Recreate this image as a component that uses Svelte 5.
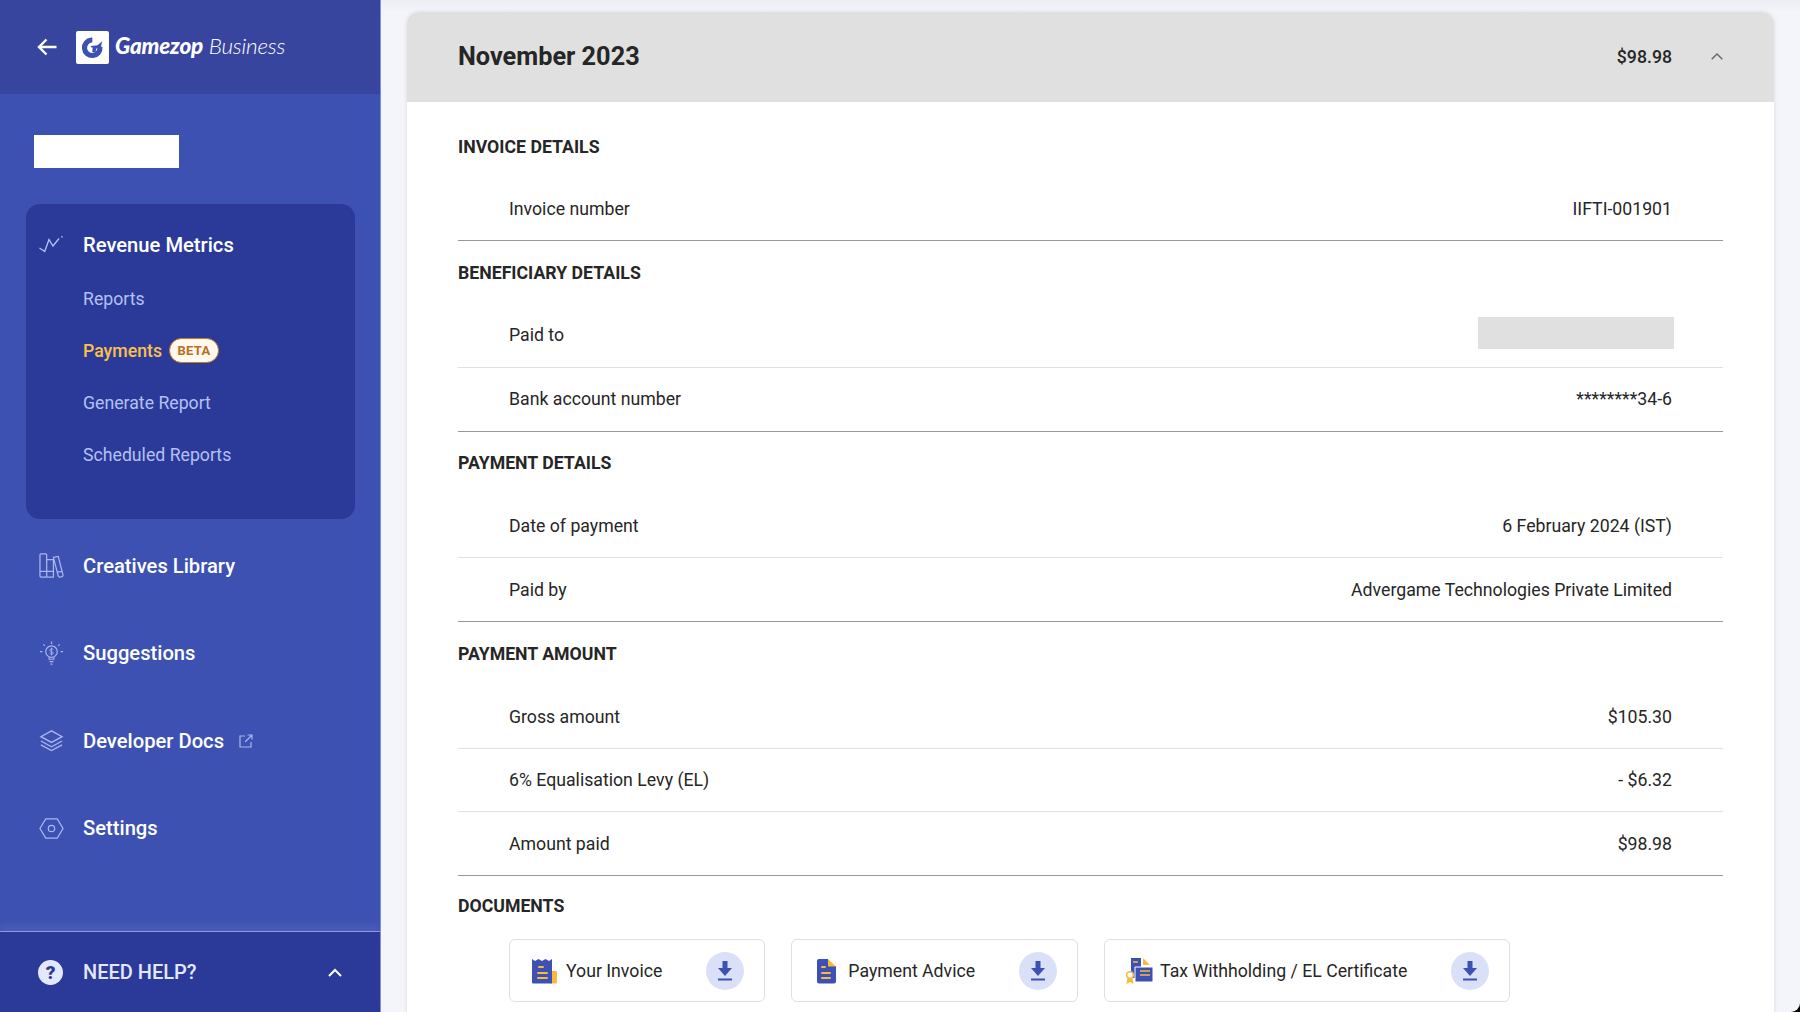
<script>
  const subItems = ["Reports", "Payments", "Generate Report", "Scheduled Reports"];
  const sections = [
    { title: "INVOICE DETAILS", rows: [{ label: "Invoice number", value: "IIFTI-001901" }] },
    {
      title: "BENEFICIARY DETAILS",
      rows: [
        { label: "Paid to", hidden: true },
        { label: "Bank account number", value: "********34-6" }
      ]
    },
    {
      title: "PAYMENT DETAILS",
      rows: [
        { label: "Date of payment", value: "6 February 2024 (IST)" },
        { label: "Paid by", value: "Advergame Technologies Private Limited" }
      ]
    },
    {
      title: "PAYMENT AMOUNT",
      rows: [
        { label: "Gross amount", value: "$105.30" },
        { label: "6% Equalisation Levy (EL)", value: "- $6.32" },
        { label: "Amount paid", value: "$98.98" }
      ]
    }
  ];
  const docs = [
    { name: "Your Invoice", kind: "invoice" },
    { name: "Payment Advice", kind: "advice" },
    { name: "Tax Withholding / EL Certificate", kind: "tax" }
  ];
</script>

<div class="page">
  <aside class="sidebar">
    <header class="brand">
      <svg class="back" viewBox="0 0 20 18" width="20" height="18" fill="none" stroke="#fff" stroke-width="2.400">
        <path d="M19.500 9H2.500M9.500 1.500 2 9l7.500 7.500" />
      </svg>
      <span class="logo">
        <svg viewBox="0 0 24 24" width="27" height="27">
          <circle cx="11.800" cy="12.200" r="6.900" fill="none" stroke="#3d51b3" stroke-width="4.600" stroke-dasharray="33 10.400" transform="rotate(-5 11.800 12.200)" />
          <path fill="#3d51b3" d="M10.500 10.600l6-.6 4-3.500-1 5.300-4.300 1.200-.4 3.300h-3l.3-4.300-1.600-.2Z" />
        </svg>
      </span>
      <span class="wordmark"><b>Gamezop</b> <i>Business</i></span>
    </header>

    <div class="account"></div>

    <nav class="panel">
      <div class="item first">
        <svg class="ico" viewBox="0 0 25 18" fill="none" stroke="#b4c0f5" stroke-width="1.400">
          <path d="M.5 12l5.200 3.500L10 3.500l4 6.500 6-7.500" />
          <circle cx="23" cy=".9" r=".8" fill="#b4c0f5" stroke="none" />
        </svg>
        <span>Revenue Metrics</span>
      </div>
      {#each subItems as sub}
        <div class="sub" class:active={sub === "Payments"}>
          <span>{sub}</span>
          {#if sub === "Payments"}<span class="beta">BETA</span>{/if}
        </div>
      {/each}
    </nav>

    <div class="menu">
      <div class="item">
        <svg class="ico tall" viewBox="0 0 26 26" fill="none" stroke="#a9b6f0" stroke-width="1.300">
          <rect x="1" y="1" width="7" height="24" rx="1" />
          <path d="M1 19h7M8 7h7v18H8M8 19h7" />
          <path d="M15 4.500l5-1 5 19.500a1.500 1.500 0 0 1-1 1.500l-2.500.5a1.500 1.500 0 0 1-1.500-1ZM19 20l5-1" />
        </svg>
        <span>Creatives Library</span>
      </div>
      <div class="item">
        <svg class="ico tall" viewBox="0 0 26 26" fill="none" stroke="#a9b6f0" stroke-width="1.200">
          <circle cx="13" cy="11" r="6" />
          <path d="M10.500 17v2h5v-2M11 21.500h4M12 24h2M13 .5v2.500M4.500 3.500l1.500 1.500M21.500 3.500 20 5M1 11h2.500M22.500 11H25" />
          <path d="M15 8.800c-.5-.8-3.800-1.200-3.800.8s3.700 1 3.700 3c0 1.700-3.300 1.500-4-.4M13 7v8" stroke-width=".9" />
        </svg>
        <span>Suggestions</span>
      </div>
      <div class="item">
        <svg class="ico tall" viewBox="0 0 26 26" fill="none" stroke="#a9b6f0" stroke-width="1.400">
          <path d="M13 3 2 9l11 6 11-6Z" />
          <path d="M2 13.500l11 6 11-6M2 17.500l11 6 11-6" />
        </svg>
        <span>Developer Docs</span>
        <svg class="ext" viewBox="0 0 14 14" width="14" height="14" fill="none" stroke="#a9b6f0" stroke-width="1.200">
          <path d="M6 2H1v11h11V8M6 8l7-7M8.500 1H13v4.500" />
        </svg>
      </div>
      <div class="item">
        <svg class="ico tall" viewBox="0 0 26 26" fill="none" stroke="#a9b6f0" stroke-width="1.300">
          <path d="M7 3h12l6 10-6 10H7L1 13Z" />
          <circle cx="13" cy="13" r="3.300" />
        </svg>
        <span>Settings</span>
      </div>
    </div>

    <footer class="help">
      <span class="help-icon">?</span>
      <span class="help-text">NEED HELP?</span>
      <svg viewBox="0 0 14 9" width="14" height="9" fill="none" stroke="#fff" stroke-width="2">
        <path d="M1 8l6-6 6 6" />
      </svg>
    </footer>
  </aside>

  <main class="content">
    <section class="card">
      <div class="card-head">
        <h1>November 2023</h1>
        <span class="total">$98.98</span>
        <svg viewBox="0 0 12 7" width="12" height="7" fill="none" stroke="#666" stroke-width="1.400">
          <path d="M.7 6.300 6 1l5.300 5.300" />
        </svg>
      </div>
      <div class="card-body">
        {#each sections as section}
          <div class="section">
            <h2>{section.title}</h2>
            {#each section.rows as row}
              <div class="row">
                <span>{row.label}</span>
                {#if row.hidden}
                  <span class="redacted"></span>
                {:else}
                  <span>{row.value}</span>
                {/if}
              </div>
            {/each}
          </div>
        {/each}
        <h2 class="docs-title">DOCUMENTS</h2>
        <div class="docs">
          {#each docs as doc}
            <div class="doc">
              {#if doc.kind === "invoice"}
                <svg class="doc-icon" viewBox="0 0 26 26" width="26" height="26">
                  <rect x="19" y="13" width="7" height="12.500" rx="1" fill="#f9b93f" />
                  <path fill="#3d51b3" d="M1 1l3 2 3.500-2 3.500 2 3.500-2 3.500 2 3-2v24.500H2a1 1 0 0 1-1-1Z" />
                  <path d="M8 9h4M7 15h9M7 20h9" stroke="#f9b93f" stroke-width="2" stroke-linecap="round" />
                </svg>
              {:else if doc.kind === "advice"}
                <svg class="doc-icon small" viewBox="0 0 20 26" width="20" height="26">
                  <path fill="#3d51b3" d="M3 1h9v7h8v15.500a2 2 0 0 1-2 2H3a2 2 0 0 1-2-2V3a2 2 0 0 1 2-2Z" />
                  <path fill="#f9b93f" d="M12 1l8 7.500h-8Z" />
                  <path d="M6 9h3M6 15h8M6 20h8" stroke="#f9b93f" stroke-width="2" stroke-linecap="round" />
                </svg>
              {:else}
                <svg class="doc-icon wide" viewBox="0 0 28 28" width="28" height="28">
                  <path fill="#3d51b3" d="M6 1h10v20H6Z" />
                  <path fill="#f9b93f" d="M18 1l7 7h-7Z" />
                  <path fill="#3d51b3" d="M10 10h18v15H10Z" stroke="#fff" stroke-width="1" />
                  <path d="M8 5h5M15 14h10M15 18h10" stroke="#f9b93f" stroke-width="1.500" />
                  <path fill="#f9b93f" d="M1.500 27l1-6h5l1 6-3.500-2Z" />
                  <circle cx="5" cy="18" r="3.300" fill="#fff" stroke="#f9b93f" stroke-width="1.500" />
                </svg>
              {/if}
              <span class="doc-name">{doc.name}</span>
              <span class="download">
                <svg viewBox="0 0 14 20" width="14" height="20" fill="#3d51b3">
                  <path d="M4.500 0h5v7H14l-7 8-7-8h4.500Z" />
                  <rect y="17.500" width="14" height="2" />
                </svg>
              </span>
            </div>
          {/each}
        </div>
      </div>
    </section>
  </main>
</div>

<style>
  :global(body) {
    margin: 0;
    overflow: hidden;
    background: #000;
  }
  .page {
    display: flex;
    width: 1800px;
    height: 1012px;
    overflow: hidden;
    font-family: Roboto, "Liberation Sans", sans-serif;
    color: #262626;
  }
  .sidebar {
    width: 380px;
    flex-shrink: 0;
    display: flex;
    flex-direction: column;
    background: #3d51b3;
    border-right: 1px solid #7f8fd8;
    color: #fff;
  }
  .brand {
    height: 94px;
    flex-shrink: 0;
    display: flex;
    align-items: center;
    padding-left: 37px;
    background: #38459f;
  }
  .back {
    margin-right: 19px;
  }
  .logo {
    width: 33px;
    height: 33px;
    display: flex;
    align-items: center;
    justify-content: center;
    background: #fff;
    border-radius: 2px;
    margin-right: 6px;
  }
  .wordmark {
    font-family: Lato, sans-serif;
    font-size: 22.500px;
    letter-spacing: -0.2px;
    margin-bottom: 3px;
  }
  .wordmark b {
    font-weight: 900;
    font-style: italic;
  }
  .wordmark i {
    font-weight: 300;
  }
  .account {
    width: 145px;
    height: 33px;
    margin: 41px 0 36px 34px;
    background: #fff;
  }
  .panel {
    width: 329px;
    height: 315px;
    margin-left: 26px;
    background: #2b3a98;
    border-radius: 14px;
    box-sizing: border-box;
    padding-top: 12px;
    margin-bottom: 3px;
  }
  .item {
    display: flex;
    align-items: center;
    height: 58px;
    padding-left: 39px;
    font-size: 20.200px;
    font-weight: 500;
  }
  .item.first {
    height: 57.500px;
    padding-left: 13px;
    margin-bottom: -0.600px;
  }
  .ico {
    width: 25px;
    height: 18px;
    margin-right: 19px;
    flex-shrink: 0;
  }
  .ico.tall {
    height: 25px;
  }
  .sub {
    display: flex;
    align-items: center;
    height: 52px;
    padding-left: 57px;
    font-size: 17.700px;
    color: #b4c0f5;
  }
  .sub.active {
    color: #fcc14a;
    font-weight: 500;
  }
  .beta {
    margin-left: 7px;
    width: 50px;
    height: 25px;
    box-sizing: border-box;
    display: flex;
    align-items: center;
    justify-content: center;
    border: 1px solid #c27a25;
    border-radius: 13px;
    background: #fff8ec;
    color: #b96f1f;
    font-size: 13px;
    font-weight: 700;
    letter-spacing: 0.3px;
  }
  .menu {
    flex: 1;
    display: flex;
    flex-direction: column;
    padding-top: 14.500px;
    gap: 29.500px;
  }
  .ext {
    margin-left: 15px;
  }
  .help {
    height: 80px;
    flex-shrink: 0;
    display: flex;
    align-items: center;
    padding: 0 38px;
    background: #2b3a98;
    border-top: 1px solid #8b9ae6;
    box-shadow: 0 -6px 8px rgba(255, 255, 255, 0.07);
    font-size: 20px;
    font-weight: 500;
  }
  .help-icon {
    width: 25px;
    height: 25px;
    border-radius: 50%;
    background: #e3e8fc;
    color: #2b3a98;
    display: flex;
    align-items: center;
    justify-content: center;
    font-size: 19px;
    font-weight: 900;
    margin-right: 20px;
  }
  .help-text {
    flex: 1;
    color: #e3e8fc;
  }
  .content {
    flex: 1;
    min-width: 0;
    padding: 12px 26px 0 26px;
    background: linear-gradient(#eceef4, #f4f5fa 12px);
    border-bottom-right-radius: 9px;
  }
  .card {
    background: #fff;
    border-radius: 12px 12px 0 0;
    box-shadow: 0 0 4px rgba(0, 0, 0, 0.12);
    height: 1100px;
  }
  .card-head {
    height: 89.500px;
    display: flex;
    align-items: center;
    padding: 0 51px;
    background: #e0e0e0;
    border-radius: 12px 12px 0 0;
  }
  h1 {
    flex: 1;
    margin: 0;
    font-size: 25.300px;
    font-weight: 700;
  }
  .total {
    font-size: 17.700px;
    font-weight: 500;
    margin-right: 39px;
  }
  .card-body {
    padding: 15.500px 51px 0;
  }
  .section {
    border-bottom: 1px solid #999;
  }
  h2 {
    margin: 0;
    height: 63px;
    display: flex;
    align-items: center;
    font-size: 17.700px;
    font-weight: 700;
  }
  .section:first-child h2 {
    height: 60px;
  }
  h2.docs-title {
    height: 60px;
    margin-bottom: 3px;
  }
  .row {
    height: 63.300px;
    box-sizing: border-box;
    display: flex;
    align-items: center;
    justify-content: space-between;
    padding: 0 51px;
    font-size: 17.700px;
    border-bottom: 1px solid #e0e0e0;
  }
  .row:last-child {
    border-bottom: none;
  }
  .redacted {
    width: 196px;
    height: 32px;
    margin-right: -2px;
    margin-bottom: 4.600px;
    background: #e0e0e0;
  }
  .docs {
    display: flex;
    gap: 26px;
    padding-left: 51px;
  }
  .doc {
    display: flex;
    align-items: center;
    height: 63px;
    box-sizing: border-box;
    padding: 0 20px 0 21px;
    border: 1px solid #e0e0e0;
    border-radius: 6px;
    font-size: 17.700px;
  }
  .doc-icon {
    margin-right: 9px;
  }
  .doc-icon.small {
    margin-left: 3px;
    margin-right: 12px;
  }
  .doc-icon.wide {
    margin-left: -1px;
    margin-right: 7px;
  }
  .doc-name {
    margin-right: 44px;
  }
  .download {
    width: 38px;
    height: 38px;
    border-radius: 50%;
    background: #dbe0f9;
    display: flex;
    align-items: center;
    justify-content: center;
  }
</style>
